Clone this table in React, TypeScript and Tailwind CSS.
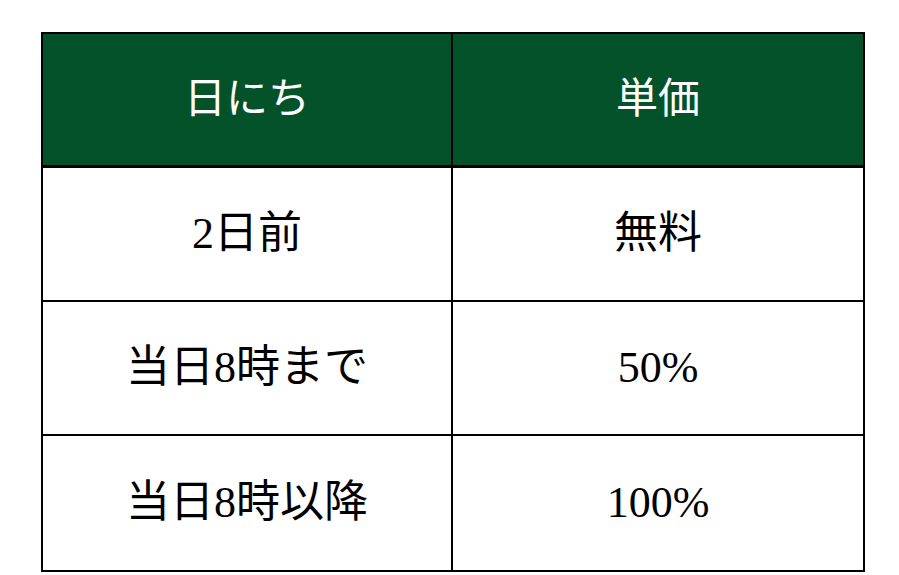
export default function App() {
  const rows = [
    { day: '2日前', price: '無料' },
    { day: '当日8時まで', price: '50%' },
    { day: '当日8時以降', price: '100%' },
  ];

  const font = { fontFamily: '"Liberation Serif", "Noto Sans CJK JP", serif' };

  return (
    <div className="min-h-[575px] w-[899px] bg-white pl-[41px] pt-[32px]" style={font}>
      <div className="grid h-[540px] w-[824px] grid-cols-2 grid-rows-4 border-2 border-black">
        <div className="flex items-center justify-center border-b-[3px] border-r-2 border-black bg-[#04522a] text-[42px] text-white">
          日にち
        </div>
        <div className="flex items-center justify-center border-b-[3px] border-black bg-[#04522a] text-[42px] text-white">
          単価
        </div>
        {rows.map((row, idx) => (
          <div key={idx} className="contents">
            <div
              className={
                idx < rows.length - 1
                  ? 'flex items-center justify-center border-b-2 border-r-2 border-black text-[44px] text-black'
                  : 'flex items-center justify-center border-r-2 border-black text-[44px] text-black'
              }
            >
              {row.day}
            </div>
            <div
              className={
                idx < rows.length - 1
                  ? 'flex items-center justify-center border-b-2 border-black text-[44px] text-black'
                  : 'flex items-center justify-center text-[44px] text-black'
              }
            >
              {row.price}
            </div>
          </div>
        ))}
      </div>
    </div>
  );
}
